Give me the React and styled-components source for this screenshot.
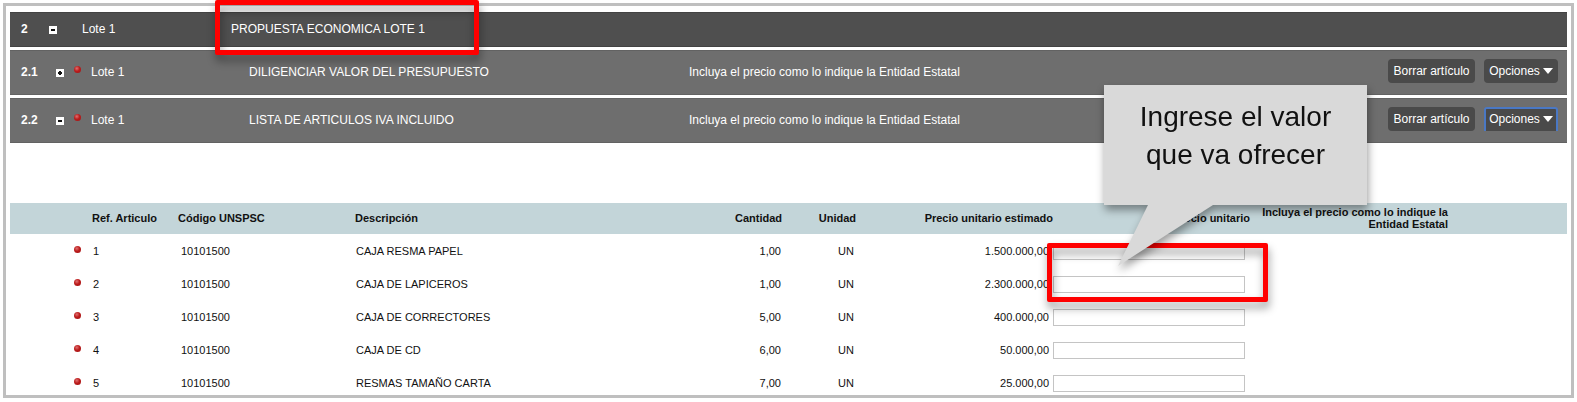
import React from 'react'
import { useState } from 'react'
import styled, { createGlobalStyle } from 'styled-components'

const GlobalStyle = createGlobalStyle`
body {
  margin: 0;
  background: #fff;
  font-family: "Liberation Sans", Arial, sans-serif;
}
* {
  box-sizing: border-box;
}
`

const Page = styled.div`
padding: 3px;
`

const Frame = styled.main`
position: relative;
border: 3px solid #bfbfbf;
padding: 6px 4px 0;
`

const Sections = styled.div`
display: flex;
flex-direction: column;
gap: 3px;
margin-bottom: 60px;
`

const SectionRow = styled.div`
display: grid;
grid-template-columns: ${(p) => (p.$main ? '28px 33px 149px 1fr' : '35px 18px 17px 158px 440px 1fr auto')};
align-items: center;
min-height: ${(p) => (p.$main ? '35px' : '45px')};
padding: 0 9px 2px 11px;
background: ${(p) => (p.$main ? '#4f4f4f' : '#6e6e6e')};
border: solid ${(p) => (p.$main ? '#434343' : '#626262')};
border-width: 1px 0;
color: #fff;
font-size: 12px;
line-height: 14px;
white-space: nowrap;
`

const Number = styled.strong``

const Label = styled.span``

const Toggle = styled.button`
display: flex;
width: 8px;
height: 8px;
margin-top: 2px;
padding: 0;
border: 0;
background: #fff;
cursor: pointer;
`

const Dot = styled.span`
display: block;
width: 7px;
height: 7px;
margin-bottom: 5px;
border-radius: 50%;
background: radial-gradient(circle at 40% 35%, #e07070 0, #bb1c1c 45%, #a01212 100%);
`

const Actions = styled.div`
display: flex;
align-self: start;
gap: 9px;
padding-top: 8px;
`

const ActionButton = styled.button`
display: flex;
align-items: center;
justify-content: center;
gap: 3px;
width: ${(p) => (p.$menu ? '74px' : '87px')};
height: 24px;
padding: 0 0 ${(p) => (p.$active ? '2px' : '0')};
border: ${(p) => (p.$active ? '2px solid #4a78c4' : '0')};
border-bottom: 0;
border-radius: ${(p) => (p.$active ? '3px 3px 0 0' : '4px')};
background: #4a4a4a;
color: #fff;
font-family: inherit;
font-size: 12px;
line-height: 14px;
cursor: pointer;
`

const Table = styled.table`
width: 100%;
table-layout: fixed;
border-collapse: collapse;
color: #111;
font-size: 11px;
line-height: 12px;
`

const Col = styled.col`
width: ${(p) => p.$w || 'auto'};
`

const Th = styled.th`
height: 31px;
padding: 0 ${(p) => p.$end || '0'} 2px 1px;
background: #c3d5d9;
text-align: ${(p) => p.$align || 'left'};
font-weight: bold;
white-space: ${(p) => (p.$wrap ? 'normal' : 'nowrap')};
`

const Td = styled.td`
padding: 11px ${(p) => p.$end || '0'} 10px ${(p) => p.$start || '0'};
text-align: ${(p) => p.$align || 'left'};
vertical-align: top;
white-space: nowrap;

tr:last-child > & {
  padding-bottom: 0;
}
`

const DotCell = styled.td`
padding: 12px 0 0 64px;
vertical-align: top;
`

const InputCell = styled.td`
padding: 9px 5px 7px 0;
vertical-align: top;

tr:last-child > & {
  padding-bottom: 3px;
}
`

const PriceInput = styled.input`
display: block;
width: 100%;
height: 17px;
padding: 0 3px;
border: 1px solid #c4c4c4;
background: #fff;
font-family: inherit;
font-size: 11px;
text-align: right;
`

const Highlight = styled.div`
position: absolute;
border: 5px solid #ff0000;
border-radius: 2px;
filter: drop-shadow(1px 6px 4px rgba(0, 0, 0, 0.4));
pointer-events: none;
`

const TitleHighlight = styled(Highlight)`
top: -6px;
left: 209px;
width: 264px;
height: 55px;
`

const PriceHighlight = styled(Highlight)`
top: 237px;
right: 303px;
width: 221px;
height: 59px;
`

const Callout = styled.aside`
position: absolute;
top: 79px;
right: 204px;
width: 263px;
padding: 13px 20px 31px;
background: #d9d9d9;
color: #111;
font-size: 28px;
line-height: 38px;
text-align: center;
filter: drop-shadow(1px 5px 4px rgba(0, 0, 0, 0.4));
pointer-events: none;
`

const Tail = styled.svg`
position: absolute;
top: 100%;
left: 0;
`

const sections = [
  { number: '2.1', title: 'DILIGENCIAR VALOR DEL PRESUPUESTO', open: false },
  { number: '2.2', title: 'LISTA DE ARTICULOS IVA INCLUIDO', open: true },
]

const items = [
  { ref: 1, code: '10101500', name: 'CAJA RESMA PAPEL', qty: '1,00', unit: 'UN', estimate: '1.500.000,00' },
  { ref: 2, code: '10101500', name: 'CAJA DE LAPICEROS', qty: '1,00', unit: 'UN', estimate: '2.300.000,00' },
  { ref: 3, code: '10101500', name: 'CAJA DE CORRECTORES', qty: '5,00', unit: 'UN', estimate: '400.000,00' },
  { ref: 4, code: '10101500', name: 'CAJA DE CD', qty: '6,00', unit: 'UN', estimate: '50.000,00' },
  { ref: 5, code: '10101500', name: 'RESMAS TAMAÑO CARTA', qty: '7,00', unit: 'UN', estimate: '25.000,00' },
]

function ToggleButton({ open, label }) {
  return (
    <Toggle type="button" aria-expanded={open} aria-label={label}>
      <svg width="8" height="8" viewBox="0 0 8 8" shapeRendering="crispEdges">
        <path d={open ? 'M2 3h4v2H2z' : 'M2 3h1V2h2v1h1v2H5v1H3V5H2z'} fill="#111" />
      </svg>
    </Toggle>
  )
}

function App() {
  const [prices, setPrices] = useState({})

  return (
    <Page>
      <GlobalStyle />
      <Frame>
        <Sections>
          <SectionRow $main>
            <Number>2</Number>
            <ToggleButton open label="Lote 1" />
            <Label>Lote 1</Label>
            <Label>PROPUESTA ECONOMICA LOTE 1</Label>
          </SectionRow>
          {sections.map((s) => (
            <SectionRow key={s.number}>
              <Number>{s.number}</Number>
              <ToggleButton open={s.open} label={s.title} />
              <Dot />
              <Label>Lote 1</Label>
              <Label>{s.title}</Label>
              <Label>Incluya el precio como lo indique la Entidad Estatal</Label>
              <Actions>
                <ActionButton type="button">Borrar artículo</ActionButton>
                <ActionButton type="button" $menu $active={s.open}>
                  Opciones
                  <svg width="10" height="6" viewBox="0 0 10 6">
                    <path d="M0 0h10L5 6z" fill="#fff" />
                  </svg>
                </ActionButton>
              </Actions>
            </SectionRow>
          ))}
        </Sections>

        <Table>
          <colgroup>
            <Col $w="81px" />
            <Col $w="86px" />
            <Col $w="177px" />
            <Col />
            <Col $w="90px" />
            <Col $w="74px" />
            <Col $w="197px" />
            <Col $w="197px" />
            <Col $w="198px" />
            <Col $w="119px" />
          </colgroup>
          <thead>
            <tr>
              <Th />
              <Th>Ref. Articulo</Th>
              <Th>Código UNSPSC</Th>
              <Th>Descripción</Th>
              <Th $align="right">Cantidad</Th>
              <Th $align="right">Unidad</Th>
              <Th $align="right">Precio unitario estimado</Th>
              <Th $align="right">Precio unitario</Th>
              <Th $align="right" $wrap>Incluya el precio como lo indique la Entidad Estatal</Th>
              <Th />
            </tr>
          </thead>
          <tbody>
            {items.map((item) => (
              <tr key={item.ref}>
                <DotCell><Dot /></DotCell>
                <Td $start="2px">{item.ref}</Td>
                <Td $start="4px">{item.code}</Td>
                <Td $start="2px">{item.name}</Td>
                <Td $align="right" $end="1px">{item.qty}</Td>
                <Td $align="right" $end="2px">{item.unit}</Td>
                <Td $align="right" $end="4px">{item.estimate}</Td>
                <InputCell>
                  <PriceInput
                    type="text"
                    aria-label={'Precio unitario ' + item.name}
                    value={prices[item.ref] || ''}
                    onChange={(e) => setPrices({ ...prices, [item.ref]: e.target.value })}
                  />
                </InputCell>
                <Td />
                <Td />
              </tr>
            ))}
          </tbody>
        </Table>

        <TitleHighlight />
        <PriceHighlight />
        <Callout>
          Ingrese el valor que va ofrecer
          <Tail width="263" height="62" viewBox="0 0 263 62">
            <path d="M44 0H109L14 61z" fill="#d9d9d9" />
          </Tail>
        </Callout>
      </Frame>
    </Page>
  )
}

export default App
